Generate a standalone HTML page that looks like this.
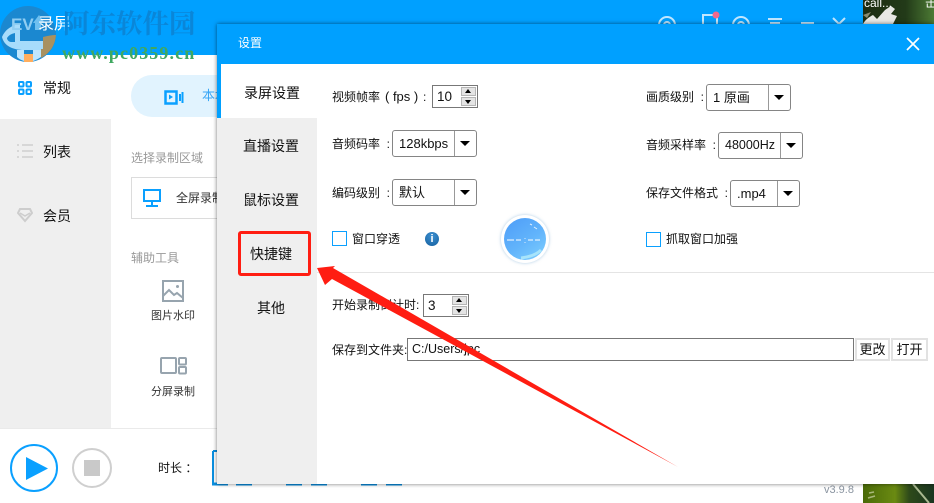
<!DOCTYPE html>
<html lang="zh"><head><meta charset="utf-8"><title>设置</title>
<style>
*{box-sizing:border-box}
html,body{margin:0;padding:0}
body{width:934px;height:503px;overflow:hidden;position:relative;background:#fff;font-family:"Liberation Sans","Noto Sans CJK SC",sans-serif;font-size:12px;color:#111}
.a{position:absolute;white-space:nowrap;line-height:18px}
.sel{position:absolute;height:27px;border:1px solid #858585;border-radius:3px;background:#fff;line-height:25px;padding-left:6px;font-size:13px}
.sel:after{content:"";position:absolute;right:0;top:0;bottom:0;width:21px;border-left:1px solid #999}
.sel:before{content:"";position:absolute;right:6px;top:10px;border:5px solid transparent;border-top:5px solid #000;border-bottom:0;z-index:1}
.spin{position:absolute;height:23px;border:1px solid #777;background:#fff;line-height:21px;padding-left:4px;font-size:13.5px}
.spin i{position:absolute;right:1px;width:15px;height:9px;background:#e4e4e4;border:1px solid #b5b5b5}
.spin i:after{content:"";position:absolute;left:3px;border:3px solid transparent}
.up{top:1px}.up:after{top:1px;border-bottom:4px solid #000!important;border-top:0!important}
.dn{top:11px}.dn:after{top:2px;border-top:4px solid #000!important;border-bottom:0!important}
.cb{position:absolute;width:15px;height:15px;border:1px solid #0aa0ff;background:#fff}
.nav{position:absolute;width:100px;text-align:center;font-size:14px;line-height:20px;color:#111}
.tb{position:absolute;background:#fff;border:2px solid #e2e2e2;text-align:center;line-height:19px;height:23px;font-size:13px}
</style></head><body>
<!-- photo behind -->
<svg class="a" style="left:863px;top:0" width="71" height="24"><defs><linearGradient id="g" x1="0" y1="0" x2="1" y2="0"><stop offset="0" stop-color="#1d2c12"/><stop offset=".6" stop-color="#223a18"/><stop offset="1" stop-color="#4c7a34"/></linearGradient></defs><rect width="71" height="24" fill="url(#g)"/><path d="M0 24C2 20 6 17 10 15L14 19 22 10 28 6 32 9 28 14 34 16 30 24Z" fill="#e8e8e4"/><path d="M0 15L8 12 4 18Z" fill="#8a8a70"/></svg>
<div class="a" style="left:864px;top:-6px;color:#fff;font-size:12px">call...</div>
<div class="a" style="left:925px;top:-6px;color:#fff;font-size:12px">击</div>
<svg class="a" style="left:863px;top:484px" width="71" height="19"><defs><linearGradient id="h" x1="0" y1="0" x2="1" y2="0"><stop offset="0" stop-color="#4a6a08"/><stop offset=".45" stop-color="#6a8a12"/><stop offset=".65" stop-color="#2e4a1a"/><stop offset="1" stop-color="#1a3520"/></linearGradient></defs><rect width="71" height="19" fill="url(#h)"/><path d="M50 0L66 19" stroke="#a9b890" stroke-width="2"/><path d="M5 14l7-2M6 9l5-1" stroke="#a9b87a" stroke-width="1.500"/></svg>

<!-- main window -->
<div class="a" style="left:0;top:0;width:863px;height:55px;background:#00a0ff"></div>
<div class="a" style="left:0;top:55px;width:863px;height:448px;background:#fff"></div>
<div class="a" style="left:0;top:119px;width:111px;height:309px;background:#efefef"></div>
<div class="a" style="left:0;top:428px;width:863px;height:1px;background:#eaeaea"></div>
<!-- top icons -->
<svg class="a" style="left:640px;top:0" width="223" height="24" fill="none" stroke="#bfe6ff" stroke-width="2">
<circle cx="27" cy="25" r="8"/><circle cx="27" cy="25" r="3"/>
<rect x="63" y="15" width="14" height="16" stroke-width="2"/><circle cx="76" cy="15" r="3.500" fill="#f2688c" stroke="none"/>
<circle cx="101" cy="25" r="8"/><circle cx="101" cy="25" r="3"/>
<path d="M128 19h14M130 23h10"/><path d="M161 23h13"/><path d="M193 18l6 6 6-6"/></svg>

<!-- logo -->
<svg class="a" style="left:0;top:0" width="58" height="64"><circle cx="28" cy="34" r="28" fill="#1b88d0"/><path d="M2 37C5 30 10 27 15 25L20 25 20 41 43 41 43 50 24 50C13 50 4 46 2 37Z" fill="#a7dcfb"/><path d="M7 38C9 35 11 34 15 33V42H11C9 42 7 40 7 38Z" fill="#1b88d0"/><path d="M33 23L39 15 45 23 41 23 41 30 35 30 35 23Z" fill="#6fc0f0"/><path d="M17 50h7v11c-3-1-5-2-7-4Z" fill="#bfe6fd"/><path d="M33 50h8v7c-3 2-5 3-8 4Z" fill="#bfe6fd"/><path d="M24 54h9v8h-9Z" fill="#ffae5e"/><path d="M43 37C47 36 52 35 56 35 55 46 50 53 41 58V49H43Z" fill="#a89160"/></svg>
<div class="a" style="left:11px;top:14px;color:#8fcdf2;font-size:17px;font-weight:bold;line-height:22px">EV</div>
<div class="a" style="left:38px;top:15px;color:#fff;font-size:16px;line-height:20px">录屏</div>

<!-- watermark -->
<div class="a" style="left:63px;top:8px;font-family:'Liberation Serif','Noto Serif CJK SC',serif;font-size:26.500px;line-height:32px;font-weight:bold;color:#0a86d8">阿东软件园</div>
<div class="a" style="left:62px;top:43px;font-family:'Liberation Serif',serif;font-size:18px;line-height:20px;font-weight:bold;color:#3fa860;letter-spacing:1.100px">www.pc0359.cn</div>

<!-- sidebar -->
<svg class="a" style="left:18px;top:81px" width="14" height="14" fill="none" stroke="#0aa0ff" stroke-width="2"><rect x="1" y="1" width="4.500" height="4.500" rx="1"/><rect x="8.500" y="1" width="4.500" height="4.500" rx="1"/><rect x="1" y="8.500" width="4.500" height="4.500" rx="1"/><rect x="8.500" y="8.500" width="4.500" height="4.500" rx="1"/></svg>
<div class="a" style="left:43px;top:79px;font-size:14px">常规</div>
<svg class="a" style="left:17px;top:144px" width="16" height="14" stroke="#cfcfcf" stroke-width="1.500"><path d="M0 1h2M5 1h11M0 7h2M5 7h11M0 13h2M5 13h11"/></svg>
<div class="a" style="left:43px;top:143px;font-size:14px">列表</div>
<svg class="a" style="left:17px;top:208px" width="16" height="15" fill="none" stroke="#cdcdcd" stroke-width="2"><path d="M3 1h10l2 4-7 8-7-8Z"/><path d="M3 5l5 3 5-3" stroke-width="1.500"/></svg>
<div class="a" style="left:43px;top:207px;font-size:14px">会员</div>

<!-- main content (mostly hidden) -->
<div class="a" style="left:131px;top:75px;width:100px;height:42px;border-radius:21px 0 0 21px;background:#e1f3fe"></div>
<svg class="a" style="left:164px;top:90px" width="20" height="15" fill="none" stroke="#0aa0ff" stroke-width="2"><rect x="1.500" y="1.500" width="11" height="12" stroke-width="2.500"/><path d="M5 4.500l4 2.500-4 2.500Z" fill="#0aa0ff" stroke="none"/><path d="M16 4v7M18.500 2v11"/></svg>
<div class="a" style="left:202px;top:87px;color:#3aa6f5;font-size:13px">本地</div>
<div class="a" style="left:131px;top:149px;color:#999">选择录制区域</div>
<div class="a" style="left:131px;top:177px;width:100px;height:42px;border:1px solid #dcdcdc"></div>
<svg class="a" style="left:143px;top:189px" width="19" height="18" fill="none" stroke="#0aa0ff" stroke-width="2"><rect x="1" y="1" width="16" height="11"/><path d="M9 13v3M3 17h12"/></svg>
<div class="a" style="left:176px;top:189px;color:#333">全屏录制</div>
<div class="a" style="left:131px;top:249px;color:#999">辅助工具</div>
<svg class="a" style="left:162px;top:280px" width="22" height="22" fill="none" stroke="#97a4ae" stroke-width="2"><rect x="1" y="1" width="20" height="20"/><path d="M1 16l6-6 5 5 3-2 6 5"/><circle cx="15.500" cy="6.500" r="1.500" fill="#97a4ae" stroke="none"/></svg>
<div class="a" style="left:151px;top:307px;font-size:11px;color:#333">图片水印</div>
<svg class="a" style="left:160px;top:357px" width="27" height="18" fill="none" stroke="#97a4ae" stroke-width="2"><rect x="1" y="1" width="15" height="15" rx="1"/><rect x="19" y="1" width="7" height="6.500" rx="1"/><rect x="19" y="10" width="7" height="6.500" rx="1"/></svg>
<div class="a" style="left:151px;top:383px;font-size:11px;color:#333">分屏录制</div>

<!-- bottom bar -->
<div class="a" style="left:10px;top:444px;width:48px;height:48px;border-radius:50%;border:2px solid #0aa0ff"></div>
<svg class="a" style="left:26px;top:457px" width="22" height="23"><path d="M0 0L22 11.500 0 23Z" fill="#0aa0ff"/></svg>
<div class="a" style="left:72px;top:448px;width:40px;height:40px;border-radius:50%;border:2px solid #cfcfcf"></div>
<div class="a" style="left:84px;top:460px;width:16px;height:16px;background:#c9c9c9"></div>
<div class="a" style="left:158px;top:459px">时长 ：</div>
<svg class="a" style="left:211px;top:449px" width="195" height="38" fill="none" stroke="#0a8fe0" stroke-width="2"><path d="M2 2H8M2 2V35"/><path d="M1 35h16M25 35h16M75 35h16M100 35h16M150 35h16M175 35h16" stroke-width="3"/></svg>
<div class="a" style="left:824px;top:481px;color:#8a94a0;font-size:11px">v3.9.8</div>

<!-- dialog -->
<div class="a" style="left:217px;top:24px;width:717px;height:460px;background:#fff;box-shadow:0 0 4px rgba(0,0,0,.55)"></div>
<div class="a" style="left:217px;top:24px;width:717px;height:40px;background:#00a0ff"></div>
<div class="a" style="left:217px;top:64px;width:4px;height:54px;background:#00a0ff"></div>
<div class="a" style="left:217px;top:118px;width:100px;height:366px;background:#efefef"></div>
<div class="a" style="left:238px;top:34px;color:#fff">设置</div>
<svg class="a" style="left:906px;top:37px" width="14" height="14" stroke="#fff" stroke-width="1.700"><path d="M1 1L13 13M13 1L1 13"/></svg>

<div class="nav" style="top:83px;left:222px">录屏设置</div>
<div class="nav" style="top:136px;left:221px">直播设置</div>
<div class="nav" style="top:190px;left:221px">鼠标设置</div>
<div class="nav" style="top:244px;left:221px">快捷键</div>
<div class="nav" style="top:298px;left:221px">其他</div>
<div class="a" style="left:238px;top:231px;width:73px;height:45px;border:3px solid #ff1d12;border-radius:3px"></div>

<div class="a" style="left:332px;top:88px">视频帧率</div>
<div class="a" style="left:385px;top:88px;font-size:13px">( fps )</div>
<div class="a" style="left:423px;top:88px">:</div>
<div class="spin" style="left:432px;top:85px;width:46px">10<i class="up"></i><i class="dn"></i></div>
<div class="a" style="left:332px;top:135px">音频码率&nbsp; :</div>
<div class="sel" style="left:392px;top:130px;width:85px">128kbps</div>
<div class="a" style="left:332px;top:184px">编码级别&nbsp; :</div>
<div class="sel" style="left:392px;top:179px;width:85px">默认</div>
<div class="cb" style="left:332px;top:231px"></div>
<div class="a" style="left:352px;top:230px">窗口穿透</div>
<div class="a" style="left:425px;top:232px;width:14px;height:14px;border-radius:50%;background:radial-gradient(circle at 50% 30%,#3c8fd0,#15609f);color:#fff;font-size:11px;font-weight:bold;line-height:14px;text-align:center">i</div>

<div class="a" style="left:501px;top:215px;width:48px;height:48px;border-radius:50%;background:#fff;box-shadow:0 0 3px rgba(120,170,210,.6)"></div>
<div class="a" style="left:504px;top:218px;width:42px;height:42px;border-radius:50%;background:linear-gradient(145deg,#4d9cf8,#62b4fb 55%,#7fd0ff);overflow:hidden"></div>
<svg class="a" style="left:504px;top:218px" width="42" height="42" fill="none" stroke="#fff"><path d="M3 22h7M12 22h5M24 22h5M31 22h5M21 20v.8M21 24v.8"/><path d="M26 6l2 1M30 9l3 2" stroke-opacity=".8"/><path d="M17 40c8-1 15-3 20-8" stroke="#a7e4fb" stroke-width="3"/></svg>

<div class="a" style="left:646px;top:88px">画质级别&nbsp; :</div>
<div class="sel" style="left:706px;top:84px;width:85px">1 原画</div>
<div class="a" style="left:646px;top:136px">音频采样率&nbsp; :</div>
<div class="sel" style="left:718px;top:132px;width:85px;font-size:12.500px">48000Hz</div>
<div class="a" style="left:646px;top:184px">保存文件格式&nbsp; :</div>
<div class="sel" style="left:730px;top:180px;width:70px">.mp4</div>
<div class="cb" style="left:646px;top:232px"></div>
<div class="a" style="left:666px;top:230px">抓取窗口加强</div>

<div class="a" style="left:317px;top:272px;width:617px;height:1px;background:#e4e4e4"></div>

<div class="a" style="left:332px;top:296px">开始录制倒计时:</div>
<div class="spin" style="left:423px;top:294px;width:46px">3<i class="up"></i><i class="dn"></i></div>
<div class="a" style="left:332px;top:341px">保存到文件夹:</div>
<div class="a" style="left:407px;top:338px;width:447px;height:23px;border:1px solid #777;line-height:21px;padding-left:4px;background:#fff;font-size:12.500px">C:/Users/jpc</div>
<div class="tb" style="left:855px;top:338px;width:35px">更改</div>
<div class="tb" style="left:891px;top:338px;width:37px">打开</div>

<svg class="a" style="left:0;top:0" width="934" height="503"><path d="M317 268L335 266 333 268 678 467 332 279 325 285Z" fill="#ff1d12"/></svg>
</body></html>
